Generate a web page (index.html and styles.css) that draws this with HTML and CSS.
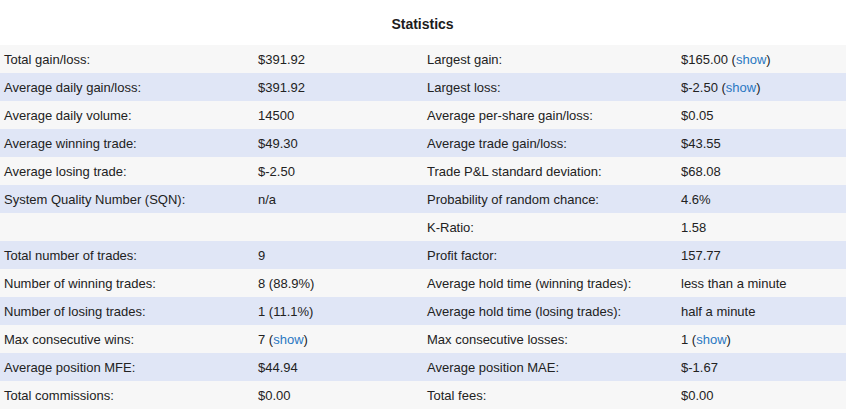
FILE: index.html
```html
<!DOCTYPE html>
<html>
<head>
<meta charset="utf-8">
<link rel="stylesheet" href="styles.css">
</head>
<body>
<div class="stats">
  <h2 class="stats-title">Statistics</h2>
  <table class="stats-table">
    <colgroup>
      <col class="c-label"><col class="c-value"><col class="c-label"><col class="c-value">
    </colgroup>
    <tbody>
      <tr><td>Total gain/loss:</td><td>$391.92</td><td>Largest gain:</td><td>$165.00 (<a href="#">show</a>)</td></tr>
      <tr><td>Average daily gain/loss:</td><td>$391.92</td><td>Largest loss:</td><td>$-2.50 (<a href="#">show</a>)</td></tr>
      <tr><td>Average daily volume:</td><td>14500</td><td>Average per-share gain/loss:</td><td>$0.05</td></tr>
      <tr><td>Average winning trade:</td><td>$49.30</td><td>Average trade gain/loss:</td><td>$43.55</td></tr>
      <tr><td>Average losing trade:</td><td>$-2.50</td><td>Trade P&amp;L standard deviation:</td><td>$68.08</td></tr>
      <tr><td>System Quality Number (SQN):</td><td>n/a</td><td>Probability of random chance:</td><td>4.6%</td></tr>
      <tr><td></td><td></td><td>K-Ratio:</td><td>1.58</td></tr>
      <tr><td>Total number of trades:</td><td>9</td><td>Profit factor:</td><td>157.77</td></tr>
      <tr><td>Number of winning trades:</td><td>8 (88.9%)</td><td>Average hold time (winning trades):</td><td>less than a minute</td></tr>
      <tr><td>Number of losing trades:</td><td>1 (11.1%)</td><td>Average hold time (losing trades):</td><td>half a minute</td></tr>
      <tr><td>Max consecutive wins:</td><td>7 (<a href="#">show</a>)</td><td>Max consecutive losses:</td><td>1 (<a href="#">show</a>)</td></tr>
      <tr><td>Average position MFE:</td><td>$44.94</td><td>Average position MAE:</td><td>$-1.67</td></tr>
      <tr><td>Total commissions:</td><td>$0.00</td><td>Total fees:</td><td>$0.00</td></tr>
    </tbody>
  </table>
</div>
</body>
</html>
```
FILE: styles.css
```css
html, body {
  margin: 0;
  padding: 0;
  background: #ffffff;
}
body {
  font-family: "Liberation Sans", Arial, Helvetica, sans-serif;
  font-size: 13px;
  color: #222222;
}
.stats {
  width: 845px;
}
.stats-title {
  margin: 0;
  height: 45px;
  line-height: 48px;
  font-size: 14px;
  font-weight: bold;
  text-align: center;
  color: #1c1c1c;
}
.stats-table {
  width: 845px;
  border-collapse: collapse;
  table-layout: fixed;
}
.c-label { width: 254px; }
.c-value { width: 169px; }
.stats-table td {
  height: 28px;
  padding: 0 4px;
  vertical-align: middle;
  white-space: nowrap;
  box-sizing: border-box;
}
.stats-table tr:nth-child(odd) td { background: #f7f7f7; }
.stats-table tr:nth-child(even) td { background: #e0e6f6; }
.stats-table a {
  color: #2a77c2;
  text-decoration: none;
}
```
